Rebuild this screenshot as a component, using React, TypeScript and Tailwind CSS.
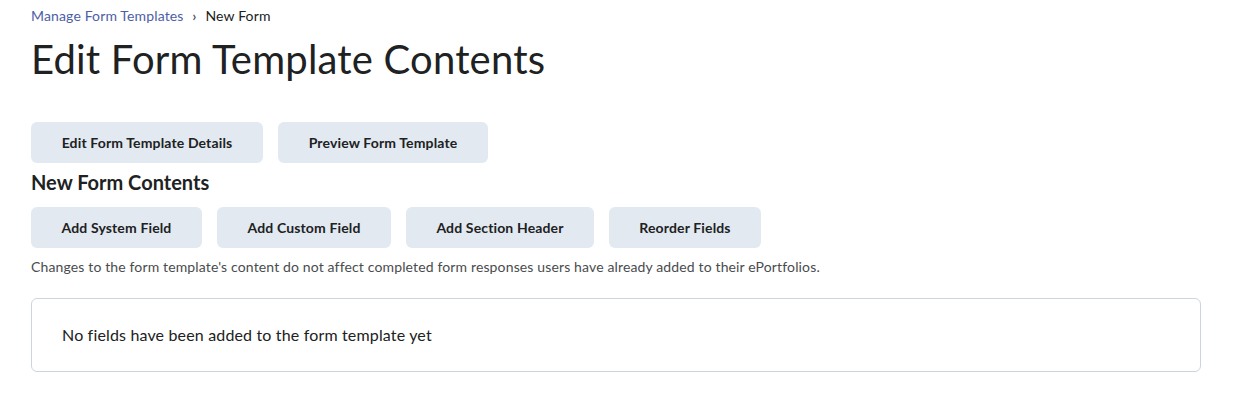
import * as React from 'react';

const Btn = ({ label, w }: { label: string; w: string }) => (
  <button
    className={`h-[41px] ${w} rounded-md bg-[#e3e9f1] text-[14px] font-bold tracking-[0.01em] text-[#202122]`}
  >
    {label}
  </button>
);

const App = () => {
  return (
    <div className="min-h-[398px] w-full bg-white px-[31px] pt-[7px] font-['Lato','Liberation_Sans',sans-serif] text-[#202122]">
      <div className="flex items-center gap-[9px] text-[14px] leading-[18px] tracking-[0.01em]">
        <span className="text-[#4c5ea5]">Manage Form Templates</span>
        <span className="text-[13px] font-bold text-[#494c4e]">›</span>
        <span className="text-[#202122]">New Form</span>
      </div>
      <h1 className="mt-[10px] text-[40px] leading-[48px] font-normal tracking-[0.005em]">Edit Form Template Contents</h1>

      <div className="mt-[39px] flex gap-[15px]">
        <Btn label="Edit Form Template Details" w="w-[232px]" />
        <Btn label="Preview Form Template" w="w-[210px]" />
      </div>

      <h2 className="mt-[7px] text-[20px] leading-[24px] font-bold">New Form Contents</h2>

      <div className="mt-[13px] flex gap-[15px]">
        <Btn label="Add System Field" w="w-[171px]" />
        <Btn label="Add Custom Field" w="w-[174px]" />
        <Btn label="Add Section Header" w="w-[188px]" />
        <Btn label="Reorder Fields" w="w-[152px]" />
      </div>

      <p className="mt-[10px] text-[14px] leading-[18px] tracking-[0.01em] text-[#494c4e]">
        Changes to the form template's content do not affect completed form responses users have already added to their ePortfolios.
      </p>

      <div className="mt-[22px] flex h-[74px] w-[1170px] items-center rounded-md border border-[#cdd5dc] px-[30px] text-[16px] tracking-[0.01em]">
        No fields have been added to the form template yet
      </div>
    </div>
  );
};

export default App;
